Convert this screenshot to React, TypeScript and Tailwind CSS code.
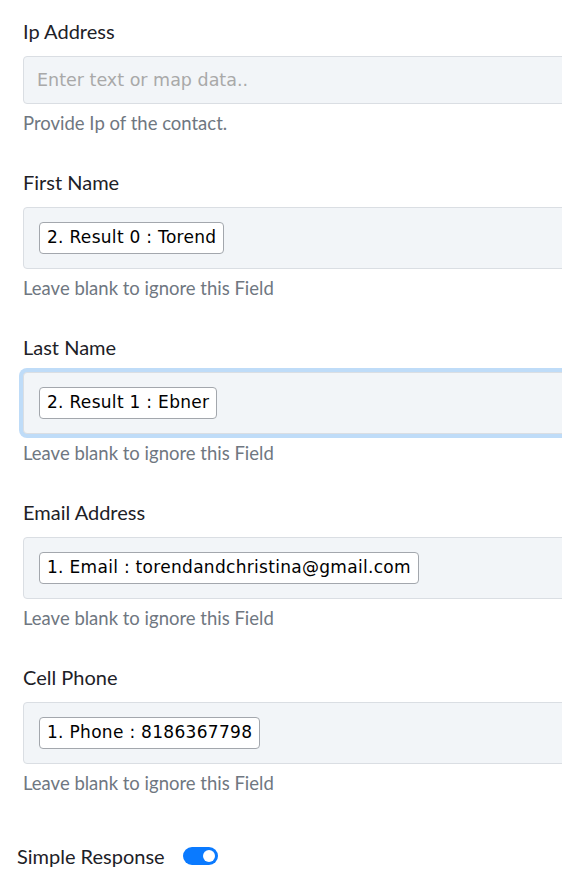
import React from "react";

type Field = {
  label: string;
  chip?: string;
  help: string;
  focused?: boolean;
};

const fields: Field[] = [
  { label: "First Name", chip: "2. Result 0 : Torend", help: "Leave blank to ignore this Field" },
  { label: "Last Name", chip: "2. Result 1 : Ebner", help: "Leave blank to ignore this Field", focused: true },
  { label: "Email Address", chip: "1. Email : torendandchristina@gmail.com", help: "Leave blank to ignore this Field" },
  { label: "Cell Phone", chip: "1. Phone : 8186367798", help: "Leave blank to ignore this Field" },
];

const labelFont = "font-['Lato','Noto_Sans',sans-serif]";
const monoish = "font-['DejaVu_Sans','Verdana',sans-serif]";

function Chip({ text }: { text: string }) {
  return (
    <span
      className={`inline-flex h-8 items-center rounded-[4px] border border-[#a3a7ad] bg-white px-[7px] text-[17px] tracking-[0.3px] text-black ${monoish}`}
    >
      {text}
    </span>
  );
}

export default function App() {
  return (
    <div className="w-full min-h-[880px] overflow-hidden bg-white">
      <div className="pt-[19px]">
        {/* Ip Address */}
        <div className="pl-[23px]">
          <div className={`h-6 text-[20px] leading-6 text-[#1d2127] ${labelFont}`}>Ip Address</div>
          <div className="mt-[13px] flex h-12 w-[620px] items-center rounded-[4px] border border-[#dadee3] bg-[#f2f5f8] px-[13px]">
            <span className={`text-[17.5px] text-[#a9a9a9] ${monoish}`}>Enter text or map data..</span>
          </div>
          <div className={`mt-[7px] h-6 text-[18.5px] leading-6 text-[#6f7781] ${labelFont}`}>
            Provide Ip of the contact.
          </div>
        </div>

        {fields.map((f) => (
          <div key={f.label} className="mt-[35px] pl-[23px]">
            <div className={`h-6 text-[20px] leading-6 text-[#1d2127] ${labelFont}`}>{f.label}</div>
            <div
              className={`mt-[13px] flex h-[62px] w-[620px] items-center rounded-[4px] border border-[#dadee3] bg-[#f2f5f8] pl-[15px] ${
                f.focused ? "shadow-[0_0_0_4px_#bfdcf8] border-[#d3d6da]" : ""
              }`}
            >
              {f.chip && <Chip text={f.chip} />}
            </div>
            <div className={`mt-[7px] h-6 text-[18.5px] leading-6 text-[#6f7781] ${labelFont}`}>{f.help}</div>
          </div>
        ))}

        <div className="mt-[49px] flex h-6 items-center pl-[17px]">
          <span className={`text-[20px] leading-6 text-[#1d2127] ${labelFont}`}>Simple Response</span>
          <span className="ml-[18px] flex h-[18px] w-[35px] items-center justify-end rounded-full bg-[#0a7aff] pr-[3px]">
            <span className="h-3 w-3 rounded-full bg-white" />
          </span>
        </div>
      </div>
    </div>
  );
}
